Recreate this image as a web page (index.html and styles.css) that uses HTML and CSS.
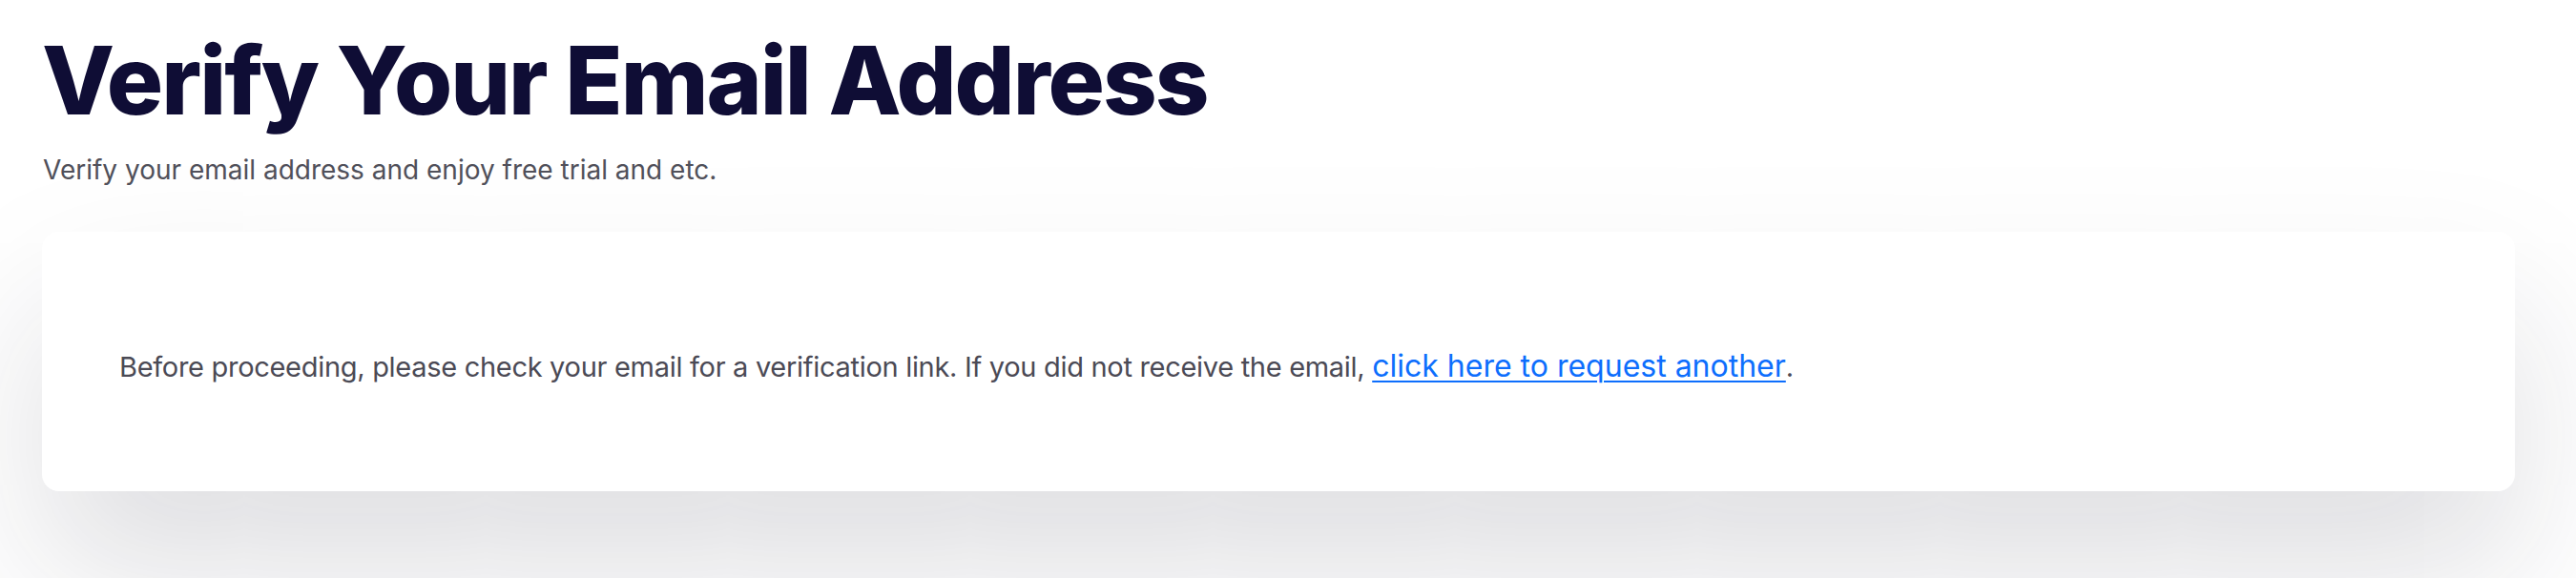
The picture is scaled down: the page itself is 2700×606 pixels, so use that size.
FILE: index.html
```html
<!DOCTYPE html>
<html lang="en">
<head>
<meta charset="utf-8">
<title>Verify Your Email Address</title>
<link rel="stylesheet" href="styles.css">
</head>
<body>
<main class="page">
  <header class="page-head">
    <h1 class="page-title">Verify Your Email Address</h1>
    <p class="page-sub">Verify your email address and enjoy free trial and etc.</p>
  </header>
  <section class="card">
    <p class="card-text">Before proceeding, please check your email for a verification link. If you did not receive the email, <a href="#" class="card-link">click here to request another</a>.</p>
  </section>
</main>
</body>
</html>
```

FILE: styles.css
```css
html, body {
  margin: 0;
  padding: 0;
  background: #ffffff;
}
body {
  font-family: Inter, "Noto Sans", sans-serif;
  overflow: hidden;
  height: 606px;
}
.page {
  padding: 34px 64px 0 44px;
}
.page-head {
  display: flex;
  flex-direction: column;
}
.page-title {
  margin: 0;
  font-size: 99px;
  line-height: 100px;
  font-weight: 800;
  color: #0f0d35;
  letter-spacing: -2px;
}
.page-sub {
  margin: 26px 0 0 1px;
  font-size: 28px;
  line-height: 36px;
  color: #50505a;
}
.card {
  margin-top: 47px;
  height: 272px;
  box-sizing: border-box;
  background: #ffffff;
  border-radius: 18px;
  box-shadow: 0 80px 160px rgba(25, 25, 45, 0.15);
  padding: 121px 80px 0 81px;
}
.card-text {
  margin: 0;
  font-size: 29px;
  line-height: 40px;
  letter-spacing: -0.3px;
  color: #4b4a55;
}
.card-link {
  font-size: 32px;
  letter-spacing: 0;
  color: #0d6efd;
  text-decoration: underline;
  text-underline-offset: 4px;
  text-decoration-thickness: 2px;
}
```
